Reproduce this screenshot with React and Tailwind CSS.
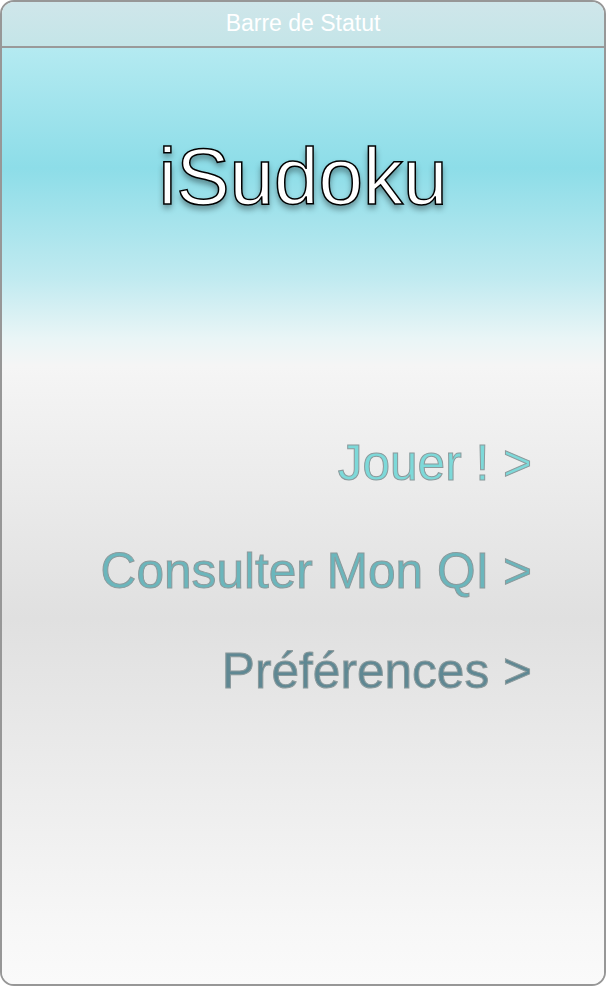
import React from "react";

const menu = [
  { label: "Jouer ! >", color: "text-[#7dd9d9]", space: "" },
  { label: "Consulter Mon QI >", color: "text-[#6bb6bc]", space: "mt-[52px]" },
  { label: "Préférences >", color: "text-[#5f8893]", space: "mt-[44px]" },
];

export default function App() {
  return (
    <div
      className="w-[606px] h-[986px] bg-white"
      style={{ fontFamily: '"Liberation Sans", Arial, sans-serif' }}
    >
      <div className="w-full h-full rounded-[14px] border-2 border-[#979797] overflow-hidden flex flex-col">
        {/* status bar */}
        <div className="h-[46px] shrink-0 bg-gradient-to-b from-[#cfe6ea] to-[#c4e5e8] border-b-2 border-[#9a9a9a] flex items-center justify-center">
          <span className="text-white text-[23px] leading-none -mt-[2px]">Barre de Statut</span>
        </div>

        <div className="flex-1 flex flex-col bg-[linear-gradient(to_bottom,#b4eaf1_0px,#8ddde8_120px,#c0eaf0_230px,#e9f5f6_290px,#f5f5f5_318px,#e0e0e0_570px,#f7f7f7_880px,#fafafa_100%)]">
          <div className="h-[270px] flex items-start justify-center pt-[89px]">
            <h1
              className="text-white text-[80px] leading-none"
              style={{
                WebkitTextStroke: "1.5px #000",
                textShadow: "0 4px 6px rgba(0,0,0,0.45)",
              }}
            >
              iSudoku
            </h1>
          </div>

          <div className="flex flex-col items-end pr-[72px] pt-[117px]">
            {menu.map((m) => (
              <div
                key={m.label}
                className={`${m.color} ${m.space} text-[49.6px] leading-[56px]`}
                style={{ WebkitTextStroke: "1px #8c9a9c" }}
              >
                {m.label}
              </div>
            ))}
          </div>
        </div>
      </div>
    </div>
  );
}
